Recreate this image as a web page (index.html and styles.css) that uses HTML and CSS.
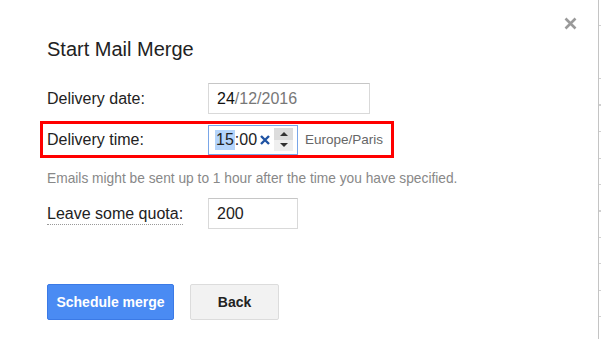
FILE: index.html
```html
<!DOCTYPE html>
<html lang="en">
<head>
  <meta charset="UTF-8">
  <title>Start Mail Merge</title>
  <link rel="stylesheet" href="styles.css">
</head>
<body>

  <div id="page">
    <div id="dialog">
      <button class="close" title="Close">
        <svg width="13" height="13" viewBox="0 0 13 13"><path d="M1.5 1.5 L11.5 11.5 M11.5 1.5 L1.5 11.5" stroke="#9a9a9a" stroke-width="2.6" fill="none"/></svg>
      </button>

      <h2>Start Mail Merge</h2>

      <div class="row row-date">
        <label>Delivery date:</label>
        <div class="field date"><span class="dark">24</span>/12/2016</div>
      </div>

      <div class="row row-time">
        <label>Delivery time:</label>
        <div class="field time">
          <span class="sel">15</span>:00<span class="clear"><svg width="10" height="10" viewBox="0 0 10 10"><path d="M1 1 L9 9 M9 1 L1 9" stroke="#1f53a3" stroke-width="2.4" fill="none"/></svg></span>
          <span class="spin">
            <span class="up"></span>
            <span class="down"></span>
          </span>
        </div>
        <span class="tz">Europe/Paris</span>
      </div>

      <div class="note">Emails might be sent up to 1 hour after the time you have specified.</div>

      <div class="row row-quota">
        <label><span class="hint">Leave some quota:</span></label>
        <div class="field quota">200</div>
      </div>

      <div class="buttons">
        <button id="scheduleBtn">Schedule merge</button>
        <button id="backBtn">Back</button>
      </div>
    </div>

    <!-- sheet gridline behind the dialog -->
    <div id="edge"></div>
  </div>

</body>
</html>
```

FILE: styles.css
```css
body {
  margin: 0;
  font-family: "Liberation Sans", Arial, sans-serif;
  background: #fff;
  color: #222;
}
#page {
  display: flex;
  height: 339px;
  overflow: hidden;
}
#dialog {
  flex: 1;
  position: relative;
  padding: 37px 0 0 47px;
}
#edge {
  width: 2px;
  margin-right: 1px;
  border-left: 1px solid #c4c4c4;
  background: repeating-linear-gradient(to bottom, transparent 0, transparent 25px, #d0d0d0 25px, #d0d0d0 26px, transparent 26px, transparent 26.5px);
}
.close {
  position: absolute;
  top: 17px;
  right: 21px;
  padding: 0;
  border: 0;
  background: none;
  line-height: 0;
  cursor: pointer;
}
h2 {
  margin: 0 0 22px;
  font-size: 20px;
  font-weight: normal;
  line-height: 24px;
  color: #222;
}
.row {
  display: flex;
  align-items: center;
  font-size: 16px;
}
.row label {
  width: 161px;
  flex-shrink: 0;
}
.field {
  box-sizing: border-box;
  height: 31px;
  padding: 0 8px;
  border: 1px solid #d9d9d9;
  border-top-color: #c6c6c6;
  display: flex;
  align-items: center;
  font-size: 16px;
  color: #222;
}
.date {
  width: 162px;
  color: #777;
}
.date .dark {
  color: #111;
}
.row-time {
  box-sizing: border-box;
  width: 354px;
  height: 37px;
  margin: 7px 0 0 -7px;
  padding: 0 0 0 4px;
  border: 3px solid #f00;
}
.time {
  width: 90px;
  height: 30px;
  padding: 0 0 0 6px;
  border: 1px solid #79a6e8;
}
.time .sel {
  background: #b4d4fb;
  padding: 1px 1px;
}
.time .clear {
  margin-left: 3px;
  line-height: 0;
}
.spin {
  margin-left: 4px;
  width: 19px;
  height: 23px;
  display: flex;
  flex-direction: column;
}
.spin span {
  flex: 1;
  display: flex;
  align-items: center;
  justify-content: center;
}
.spin .up {
  background: #dcdcdc;
}
.spin .down {
  background: #efefef;
}
.spin .up::after {
  content: "";
  border: 4.5px solid transparent;
  border-top: 0;
  border-bottom: 4.5px solid #333;
}
.spin .down::after {
  content: "";
  border: 4.5px solid transparent;
  border-bottom: 0;
  border-top: 4.5px solid #333;
}
.tz {
  margin-left: 7px;
  font-size: 13.5px;
  color: #666;
}
.note {
  margin-top: 13px;
  font-size: 13.75px;
  color: #888;
}
.row-quota {
  margin-top: 12px;
}
.hint {
  border-bottom: 1px dotted #999;
  padding-bottom: 2px;
}
.quota {
  width: 90px;
}
.buttons {
  display: flex;
  gap: 16px;
  margin-top: 55px;
}
.buttons button {
  box-sizing: border-box;
  height: 36px;
  border-radius: 2px;
  font-family: "Liberation Sans", Arial, sans-serif;
  font-size: 14px;
  font-weight: bold;
  cursor: pointer;
}
#scheduleBtn {
  width: 127px;
  background: #4a8bf3;
  border: 1px solid #3b7ae6;
  color: #fff;
}
#backBtn {
  width: 89px;
  background: #f2f2f2;
  border: 1px solid #dcdcdc;
  color: #222;
}
```
